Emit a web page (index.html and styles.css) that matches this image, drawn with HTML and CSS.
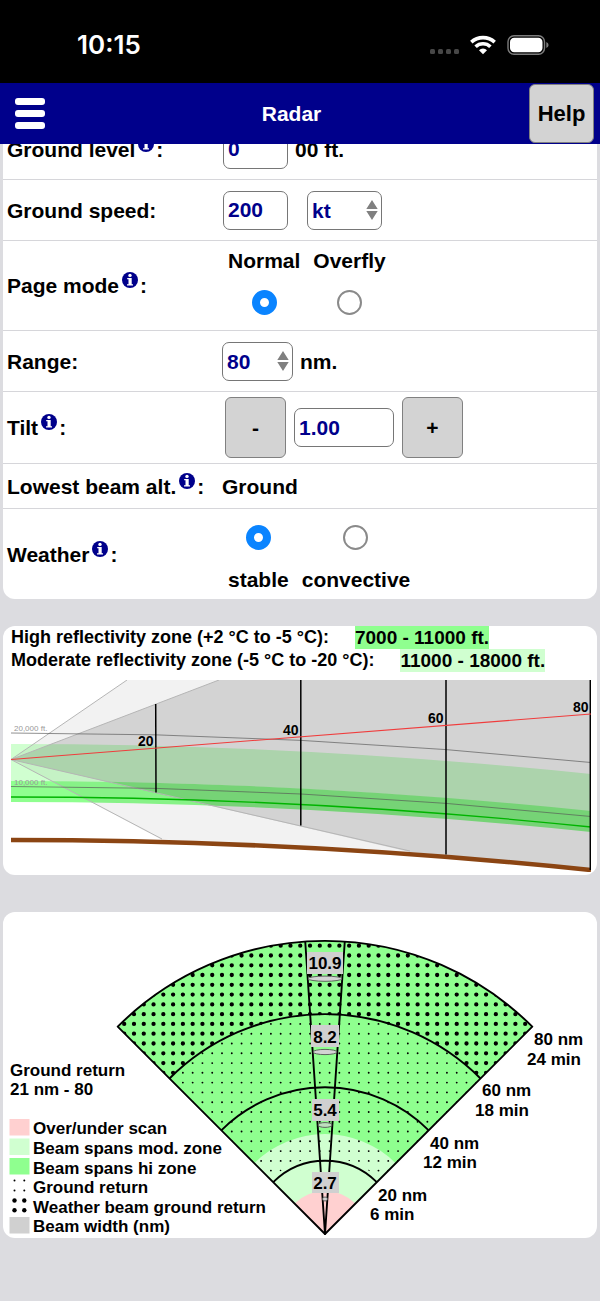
FILE: index.html
```html
<!DOCTYPE html>
<html lang="en">
<head>
<meta charset="utf-8">
<meta name="viewport" content="width=device-width, initial-scale=1">
<title>Radar</title>
<link rel="stylesheet" href="styles.css">
</head>
<body>
<svg class="defs" width="0" height="0" aria-hidden="true">
  <symbol id="info" viewBox="0 0 16 16">
    <circle cx="8" cy="8" r="8" fill="#00008b"/>
    <circle cx="8" cy="3.4" r="1.7" fill="#fff"/>
    <path d="M5.2 6H9.7V12.2H11V13.5H5V12.2H6.5V7.3H5.2Z" fill="#fff"/>
  </symbol>
  <symbol id="updown" viewBox="0 0 12 20">
    <path d="M6 0L11.7 9H.3ZM6 20L.3 11H11.7Z" fill="#808080"/>
  </symbol>
</svg>

<div class="status">
  <span class="time">10:15</span>
  <svg class="status-icons" viewBox="0 0 122 24" aria-hidden="true">
    <g fill="#474747">
      <rect x="1" y="16" width="5" height="5" rx="1.5"/><rect x="9" y="16" width="5" height="5" rx="1.5"/>
      <rect x="17" y="16" width="5" height="5" rx="1.5"/><rect x="25" y="16" width="5" height="5" rx="1.5"/>
    </g>
    <g fill="none" stroke="#fff" stroke-width="3.6">
      <path d="M42.3 9.2A17.3 17.3 0 0 1 65.7 9.2"/>
      <path d="M46.6 13.7A10.8 10.8 0 0 1 61.4 13.7"/>
    </g>
    <path d="M54 21.3L50 17.2A5.8 5.8 0 0 1 58 17.2Z" fill="#fff"/>
    <rect x="79" y="2.8" width="36.5" height="18.4" rx="6" fill="none" stroke="#7c7c7c" stroke-width="1.4"/>
    <rect x="81" y="4.8" width="32.5" height="14.4" rx="4.2" fill="#fff"/>
    <path d="M117.3 9Q119.6 10 119.6 12T117.3 15Z" fill="#7c7c7c"/>
  </svg>
</div>

<header class="bar">
  <button class="menu" type="button" aria-label="Menu"><i></i><i></i><i></i></button>
  <h1>Radar</h1>
  <button class="help" type="button">Help</button>
</header>

<main>
  <form class="card settings">
    <div class="row">
      <div class="label"><label for="level">Ground level</label><a class="info" href="#level" aria-label="About ground level"><svg><use href="#info"/></svg></a>:</div>
      <div class="field"><input class="box short" id="level" type="text" value="0"><span class="unit">00 ft.</span></div>
    </div>
    <div class="row">
      <div class="label"><label for="speed">Ground speed:</label></div>
      <div class="field"><input class="box short" id="speed" type="text" value="200">
        <span class="pick speed-unit"><select class="box" aria-label="Speed unit"><option>kt</option></select><svg><use href="#updown"/></svg></span></div>
    </div>
    <div class="row tall">
      <div class="label">Page mode<a class="info" href="#normal" aria-label="About page mode"><svg><use href="#info"/></svg></a>:</div>
      <div class="field options">
        <label>Normal<input id="normal" type="radio" name="mode" checked></label>
        <label>Overfly<input type="radio" name="mode"></label>
      </div>
    </div>
    <div class="row">
      <div class="label"><label for="range">Range:</label></div>
      <div class="field"><span class="pick range"><select class="box" id="range"><option>80</option></select><svg><use href="#updown"/></svg></span><span class="unit">nm.</span></div>
    </div>
    <div class="row medium">
      <div class="label"><label for="tilt">Tilt</label><a class="info" href="#tilt" aria-label="About tilt"><svg><use href="#info"/></svg></a>:</div>
      <div class="field stepper"><button class="step" type="button">-</button><input class="box" id="tilt" type="text" value="1.00"><button class="step" type="button">+</button></div>
    </div>
    <div class="row low">
      <div class="label">Lowest beam alt.<a class="info" href="#lowest" aria-label="About lowest beam altitude"><svg><use href="#info"/></svg></a>:</div>
      <div class="field"><output id="lowest">Ground</output></div>
    </div>
    <div class="row tall">
      <div class="label">Weather<a class="info" href="#stable" aria-label="About weather"><svg><use href="#info"/></svg></a>:</div>
      <div class="field options below">
        <label>stable<input id="stable" type="radio" name="weather" checked></label>
        <label>convective<input type="radio" name="weather"></label>
      </div>
    </div>
  </form>

  <section class="card profile">
    <p>High reflectivity zone (+2 °C to -5 °C): <span class="high">7000 - 11000 ft.</span></p>
    <p>Moderate reflectivity zone (-5 °C to -20 °C): <span class="moderate">11000 - 18000 ft.</span></p>
    <svg class="side" viewBox="11 680 580 192" role="img" aria-label="Beam side profile">
      <path d="M11 744Q301 744 591 774V812Q301 781 11 781Z" fill="#d0ffd0"/>
      <path d="M11 781Q301 781 591 811V832Q301 802 11 802Z" fill="#8fff8f"/>
      <path d="M11 759.5L127 680H591V870Q376 848 162 840Z" fill="#000" fill-opacity=".05"/>
      <path d="M11 759.5L219 680H591V870Q500 860 410 852Z" fill="#000" fill-opacity=".125"/>
      <g fill="none" stroke="#b5b5b5">
        <path d="M127 680L11 759.5L162 839M219 680L11 759.5L410 851"/>
      </g>
      <g fill="none" stroke="#555" stroke-opacity=".65">
        <path d="M11 733Q301 733 591 762.5"/>
        <path d="M11 786.5Q301 786.5 591 816.5"/>
      </g>
      <path d="M11 797Q301 797 591 827" fill="none" stroke="#00b400" stroke-width="1.3"/>
      <path d="M11 840Q301 840 591 870" fill="none" stroke="#8b4513" stroke-width="4.6"/>
      <path d="M155.7 704L156 792.5M300.8 680V825.5M446 680V854.5M590.3 680V870" fill="none" stroke="#000" stroke-width="1.5"/>
      <path d="M11 759.5L591 714" stroke="#f03c3c" stroke-width="1.1"/>
      <g class="mark"><text x="138" y="746">20</text><text x="283" y="735">40</text><text x="428" y="723">60</text><text x="573" y="712">80</text></g>
      <g class="feet"><text x="14" y="731">20,000 ft.</text><text x="14" y="785">10,000 ft.</text></g>
    </svg>
  </section>

  <section class="card plan">
    <svg viewBox="3 912 594 326" role="img" aria-label="Beam plan view">
      <defs>
        <clipPath id="ground"><path d="M169.5 1078.5A220 220 0 0 1 480.5 1078.5L379.5 1179.5A77 77 0 0 0 270.5 1179.5Z"/></clipPath>
        <clipPath id="weather"><path d="M117.7 1026.7A293.2 293.2 0 0 1 532.3 1026.7L480.5 1078.5A220 220 0 0 0 169.5 1078.5Z"/></clipPath>
      </defs>
      <path d="M325 1234L117.7 1026.7A293.2 293.2 0 0 1 532.3 1026.7Z" fill="#8fff8f"/>
      <path d="M325 1234L254.3 1163.3A100 100 0 0 1 395.7 1163.3Z" fill="#d0ffd0"/>
      <path d="M325 1234L294.6 1203.6A43 43 0 0 1 355.4 1203.6Z" fill="#ffd0d0"/>
      <g fill="none" stroke="#000" stroke-linecap="round" stroke-dasharray="0 9.78">
        <path clip-path="url(#ground)" stroke-width="1.9" d="M124.2 1014.2H540M124.2 1023.9H540M124.2 1033.7H540M124.2 1043.5H540M124.2 1053.3H540M124.2 1063.1H540M124.2 1072.8H540M124.2 1082.6H540M124.2 1092.4H540M124.2 1102.2H540M124.2 1112H540M124.2 1121.7H540M124.2 1131.5H540M124.2 1141.3H540M124.2 1151.1H540M124.2 1160.9H540M124.2 1170.6H540"/>
        <path clip-path="url(#weather)" stroke-width="4.3" d="M124.2 945.7H540M124.2 955.5H540M124.2 965.3H540M124.2 975H540M124.2 984.8H540M124.2 994.6H540M124.2 1004.4H540M124.2 1014.2H540M124.2 1023.9H540M124.2 1033.7H540M124.2 1043.5H540M124.2 1053.3H540M124.2 1063.1H540M124.2 1072.8H540"/>
      </g>
      <g fill="none" stroke="#000" stroke-width="1.9" stroke-linejoin="round">
        <path d="M325 1234L117.7 1026.7A293.2 293.2 0 0 1 532.3 1026.7Z"/>
        <path d="M169.5 1078.5A220 220 0 0 1 480.5 1078.5"/>
        <path d="M221.3 1130.3A146.6 146.6 0 0 1 428.7 1130.3"/>
        <path d="M273.2 1182.2A73.3 73.3 0 0 1 376.8 1182.2"/>
        <path d="M305.2 941L325 1234L344.8 941"/>
      </g>
      <g fill="#d3d3d3" stroke="#555" stroke-width=".9">
        <ellipse cx="325" cy="978.7" rx="17" ry="2.6"/>
        <ellipse cx="325" cy="1052" rx="12" ry="2.6"/>
        <ellipse cx="325" cy="1125" rx="7" ry="2.4" fill-opacity=".7"/>
        <ellipse cx="325" cy="1199" rx="2.5" ry="2"/>
      </g>
      <g fill="#d0d0d0">
        <rect x="307" y="952" width="36" height="22"/><rect x="311" y="1025" width="28" height="22"/>
        <rect x="312" y="1099" width="27" height="22"/><rect x="312" y="1172" width="27" height="21"/>
      </g>
      <g class="plan-text" text-anchor="middle">
        <text x="325" y="969">10.9</text><text x="325" y="1043">8.2</text><text x="325" y="1116">5.4</text><text x="325" y="1189">2.7</text>
      </g>
      <g class="plan-text">
        <text x="534" y="1045">80 nm</text><text x="527" y="1065">24 min</text>
        <text x="482" y="1096">60 nm</text><text x="475" y="1116">18 min</text>
        <text x="430" y="1149">40 nm</text><text x="423" y="1168">12 min</text>
        <text x="378" y="1201">20 nm</text><text x="370" y="1220">6 min</text>
        <text x="10" y="1076">Ground return</text><text x="10" y="1095">21 nm - 80</text>
        <text x="33" y="1134">Over/under scan</text><text x="33" y="1154">Beam spans mod. zone</text>
        <text x="33" y="1174">Beam spans hi zone</text><text x="33" y="1193">Ground return</text>
        <text x="33" y="1213">Weather beam ground return</text><text x="33" y="1232">Beam width (nm)</text>
      </g>
      <rect x="9.5" y="1119" width="20" height="16.5" fill="#ffd0d0"/>
      <rect x="9.5" y="1138.5" width="20" height="16.5" fill="#d0ffd0"/>
      <rect x="9.5" y="1158" width="20" height="16.5" fill="#8fff8f"/>
      <rect x="9.5" y="1217" width="20" height="16.5" fill="#d0d0d0"/>
      <g><circle cx="14.5" cy="1180.5" r="1"/><circle cx="24.3" cy="1180.5" r="1"/><circle cx="14.5" cy="1190.5" r="1"/><circle cx="24.3" cy="1190.5" r="1"/>
      <circle cx="14.5" cy="1200.5" r="2.2"/><circle cx="24.3" cy="1200.5" r="2.2"/><circle cx="14.5" cy="1210.3" r="2.2"/><circle cx="24.3" cy="1210.3" r="2.2"/></g>
    </svg>
  </section>
</main>
</body>
</html>
```
FILE: styles.css
```css
* { box-sizing: border-box; }

body {
  margin: 0;
  min-height: 100vh;
  background: #dcdce0;
  color: #000;
  font: bold 21px/25px "Liberation Sans", Arial, sans-serif;
}

button, input, select { font: inherit; margin: 0; }

.defs { display: none; }

.status {
  display: flex;
  justify-content: space-between;
  align-items: center;
  height: 83px;
  padding: 7px 49px 0 77px;
  background: #000;
  color: #fff;
}
.time { font: 600 26px/32px Inter, sans-serif; }
.status-icons { width: 122px; height: 24px; }

.bar {
  position: relative;
  z-index: 1;
  display: flex;
  align-items: center;
  height: 61px;
  padding-right: 6px;
  background: #00008b;
  color: #fff;
}
.bar h1 {
  flex: 1;
  margin: 0;
  font-size: 21px;
  text-align: center;
}
.menu {
  display: flex;
  flex-direction: column;
  gap: 5px;
  width: 54px;
  padding: 0 9px 0 15px;
  border: 0;
  background: none;
}
.menu i {
  height: 7px;
  border-radius: 3px;
  background: #fff;
}
.help, .step {
  padding: 0;
  border: 1px solid #808080;
  border-radius: 6px;
  background: #d3d3d3;
  color: #000;
}
.help { width: 65px; height: 59px; font-size: 22px; }

main {
  display: flow-root;
  padding: 0 3px 24px;
}
.card {
  border-radius: 12px;
  background: #fff;
  overflow: hidden;
}

/* The form is scrolled partly under the bar. */
.settings { margin-top: -25px; }

.row {
  display: grid;
  grid-template-columns: 215px 1fr;
  align-items: center;
  min-height: 61px;
  padding-left: 4px;
  border-bottom: 1px solid #d6d6da;
}
.row:last-child { border-bottom: 0; }
.tall { min-height: 90px; }
.medium { min-height: 72px; }
.low { min-height: 45px; }
.label { white-space: nowrap; }

.info {
  display: inline-block;
  height: 16px;
  margin: -3px 2px 0 3px;
  vertical-align: 5px;
  line-height: 0;
}
.info svg { width: 16px; height: 16px; }

.field { display: flex; align-items: center; }
.box {
  height: 39px;
  padding: 0 4px;
  border: 1px solid #767676;
  border-radius: 7px;
  background: #fff;
  color: #00008b;
}
.short { width: 65px; margin-left: 1px; }
.unit { margin-left: 7px; }

.pick { position: relative; }
.pick select { appearance: none; width: 100%; display: block; }
.pick svg {
  position: absolute;
  top: 9px;
  right: 4px;
  width: 12px;
  height: 20px;
  pointer-events: none;
}
.speed-unit { width: 75px; margin-left: 19px; }
.range { width: 71px; }

.options { gap: 13px; padding: 0 0 8px 6px; }
.options label {
  display: flex;
  flex-direction: column;
  align-items: center;
  gap: 17px;
}
.below { padding: 8px 0 0 6px; }
.below label { flex-direction: column-reverse; }
.options input {
  appearance: none;
  width: 25px;
  height: 25px;
  border: 2px solid #8a8a8a;
  border-radius: 50%;
  background: #fff;
}
.options input:checked { border: 8px solid #0a84ff; }

.stepper { gap: 8px; padding-left: 3px; }
.stepper .box { width: 100px; }
.step { width: 61px; height: 61px; }

.profile {
  margin-top: 27px;
  padding: 0 6px 3px 8px;
}
.profile p {
  display: flex;
  align-items: center;
  gap: 26px;
  margin: 0;
  font-size: 18px;
  line-height: 23px;
}
.high, .moderate { font-size: 19px; }
.high { background: #8fff8f; }
.moderate { background: #d0ffd0; }
.side { display: block; width: 100%; margin-top: 8px; }
.mark { font-size: 14px; }
.feet { font-size: 8px; font-weight: normal; fill: #999; }

.plan { margin-top: 37px; }
.plan svg { display: block; width: 100%; }
.plan-text { font-size: 17px; }
```
